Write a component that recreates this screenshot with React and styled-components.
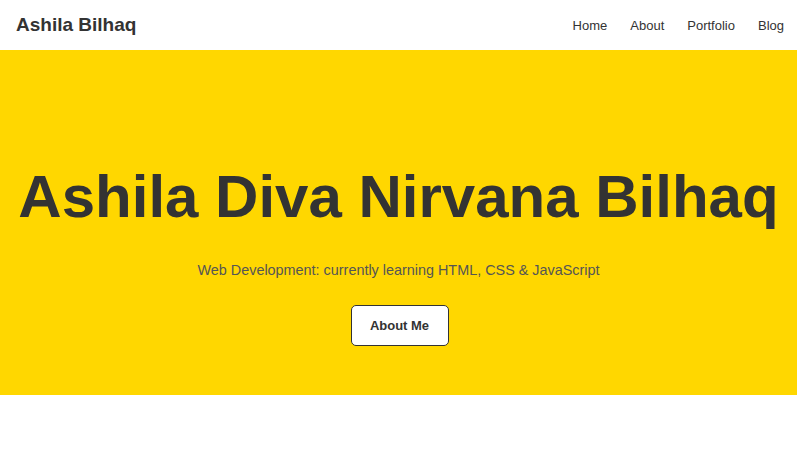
import React from "react";
import styled, { createGlobalStyle } from "styled-components";

const GlobalStyle = createGlobalStyle`
  * { box-sizing: border-box; }
  body {
    margin: 0;
    font-family: "Liberation Sans", Arial, sans-serif;
    color: #333;
    background: #fff;
  }
`;

function App() {
  return (
    <>
      <GlobalStyle />
      <Header>
        <Logo>Ashila Bilhaq</Logo>
        <Nav>
          {["Home", "About", "Portfolio", "Blog"].map((item) => (
            <NavLink key={item} href="#">
              {item}
            </NavLink>
          ))}
        </Nav>
      </Header>
      <Hero>
        <Title>Ashila Diva Nirvana Bilhaq</Title>
        <Subtitle>
          Web Development: currently learning HTML, CSS &amp; JavaScript
        </Subtitle>
        <Button>About Me</Button>
      </Hero>
    </>
  );
}

export default App;

const Header = styled.header`
  height: 50px;
  padding: 0 13px 0 16px;
  display: flex;
  align-items: center;
  justify-content: space-between;
  background: #fff;
`;

const Logo = styled.div`
  font-size: 19px;
  font-weight: bold;
  color: #333;
`;

const Nav = styled.nav`
  display: flex;
  gap: 23px;
`;

const NavLink = styled.a`
  font-size: 13px;
  color: #333;
  text-decoration: none;
`;

const Hero = styled.section`
  height: 345px;
  background: #ffd700;
  display: flex;
  flex-direction: column;
  align-items: center;
  padding: 112px 10px 0;
  text-align: center;
`;

const Title = styled.h1`
  margin: 0;
  font-size: 60px;
  font-weight: bold;
  white-space: nowrap;
  color: #333;
`;

const Subtitle = styled.p`
  margin: 31px 0 27px;
  font-size: 14.4px;
  color: #555;
`;

const Button = styled.button`
  width: 98px;
  height: 41px;
  margin-left: 2px;
  background: #fff;
  border: 1px solid #333;
  border-radius: 5px;
  font-family: "Liberation Sans", Arial, sans-serif;
  font-size: 13px;
  font-weight: bold;
  color: #333;
  cursor: pointer;
`;
